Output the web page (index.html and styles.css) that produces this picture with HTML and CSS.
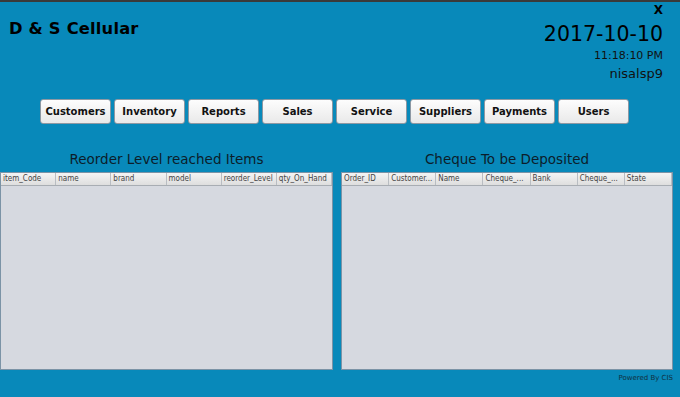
FILE: index.html
```html
<!DOCTYPE html>
<html>
<head>
<meta charset="utf-8">
<link rel="stylesheet" href="styles.css">
</head>
<body>
<div class="frame">
  <header class="top">
    <h1 class="brand">D &amp; S Cellular</h1>
    <div class="info">
      <span class="close">X</span>
      <span class="date">2017-10-10</span>
      <span class="time">11:18:10 PM</span>
      <span class="user">nisalsp9</span>
    </div>
  </header>
  <nav class="menu">
    <button class="btn">Customers</button>
    <button class="btn">Inventory</button>
    <button class="btn">Reports</button>
    <button class="btn">Sales</button>
    <button class="btn">Service</button>
    <button class="btn">Suppliers</button>
    <button class="btn">Payments</button>
    <button class="btn">Users</button>
  </nav>
  <main class="panels">
    <section class="panel panel-left">
      <h2 class="panel-title">Reorder Level reached Items</h2>
      <div class="table">
        <div class="thead cols6">
          <span>item_Code</span><span>name</span><span>brand</span><span>model</span><span>reorder_Level</span><span>qty_On_Hand</span>
        </div>
      </div>
    </section>
    <section class="panel panel-right">
      <h2 class="panel-title">Cheque To be Deposited</h2>
      <div class="table">
        <div class="thead cols7">
          <span>Order_ID</span><span>Customer...</span><span>Name</span><span>Cheque_...</span><span>Bank</span><span>Cheque_...</span><span>State</span>
        </div>
      </div>
    </section>
  </main>
  <footer class="foot">Powered By CIS</footer>
</div>
</body>
</html>
```

FILE: styles.css
```css
* { box-sizing: border-box; margin: 0; padding: 0; }
html, body { width: 680px; height: 397px; overflow: hidden; }
body {
  background: #0889ba;
  font-family: "DejaVu Sans", sans-serif;
  color: #000;
}
.frame {
  width: 680px;
  height: 397px;
  border-top: 2px solid #3a3a3a;
  display: flex;
  flex-direction: column;
}
.top {
  display: flex;
  justify-content: space-between;
  height: 92px;
  padding: 0 17px 0 9px;
}
.brand {
  font-size: 16.3px;
  font-weight: bold;
  margin-top: 17px;
  letter-spacing: 0.2px;
}
.info {
  display: flex;
  flex-direction: column;
  align-items: flex-end;
}
.close {
  font-size: 12px;
  font-weight: bold;
  line-height: 13px;
  margin-top: 2px;
}
.date {
  font-size: 20.5px;
  line-height: 26px;
  margin-top: 4px;
}
.time {
  font-size: 11px;
  line-height: 14px;
  margin-top: 2px;
  color: #111;
}
.user {
  font-size: 13px;
  line-height: 16px;
  margin-top: 3px;
  color: #111;
}
.menu {
  display: flex;
  gap: 3px;
  padding-left: 40px;
  height: 25px;
  margin-top: 5px;
}
.btn {
  width: 71px;
  height: 25px;
  font-family: "DejaVu Sans", sans-serif;
  font-size: 10px;
  font-weight: bold;
  color: #111;
  background: linear-gradient(#fdfdfd, #e9e9e9);
  border: 1px solid #8d98a3;
  border-radius: 3px;
}
.panels {
  display: flex;
  gap: 8px;
  padding: 0 7px 0 0;
  margin-top: 27px;
}
.panel {
  display: flex;
  flex-direction: column;
}
.panel-left { width: 333px; }
.panel-right { width: 332px; }
.panel-title {
  font-size: 13.5px;
  font-weight: normal;
  text-align: center;
  line-height: 17px;
  color: #0c1d2a;
}
.table {
  margin-top: 4px;
  height: 198px;
  background: #d6d9e0;
  border: 1px solid #7b93a6;
}
.thead {
  display: grid;
  height: 13px;
  background: linear-gradient(#f4f4f4, #dedede);
  border-bottom: 1px solid #a8adb3;
}
.cols6 { grid-template-columns: repeat(6, 1fr); }
.cols7 { grid-template-columns: repeat(7, 1fr); }
.thead span {
  font-family: "DejaVu Sans Condensed", "DejaVu Sans", sans-serif;
  font-stretch: condensed;
  font-size: 8px;
  line-height: 12px;
  color: #444;
  padding-left: 2px;
  border-right: 1px solid #b9bdc2;
  white-space: nowrap;
  overflow: hidden;
}
.foot {
  align-self: flex-end;
  font-size: 7px;
  color: #10303f;
  margin-top: 4px;
  margin-right: 7px;
}
```
